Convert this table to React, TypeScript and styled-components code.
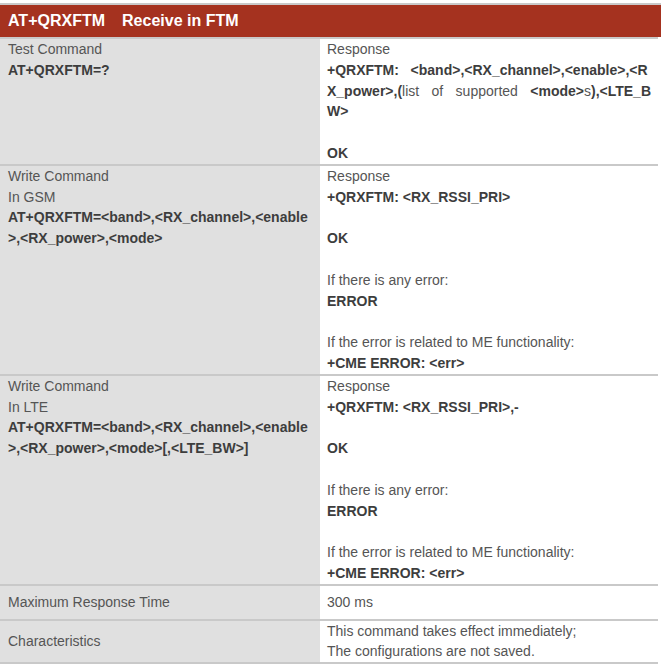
import styled, { createGlobalStyle } from "styled-components"

const GlobalStyle = createGlobalStyle`
    body {
        margin: 0;
        background: #fff;
        font-family: "Liberation Sans", Arial, sans-serif;
    }
`

const Page = styled.div`
    width: 661px;
    padding-top: 3px;
`

const Header = styled.div`
    border-top: 2px solid #c9c9c9;
    background: #a5321f;
    height: 32px;
    display: flex;
    align-items: center;
    padding: 0 8px;
    color: #fff;
    font-weight: 700;
    font-size: 16px;
    box-sizing: content-box;
`

const Title = styled.span`
    margin-left: 17px;
`

const Table = styled.div`
    width: 658px;
`

const Row = styled.div<{ $pad?: number }>`
    display: grid;
    grid-template-columns: 320px 338px;
    border-top: 2px solid #c9c9c9;
    &:last-child {
        border-bottom: 2px solid #c9c9c9;
    }
    & > div {
        padding-top: ${(p) => p.$pad ?? 0}px;
        padding-bottom: ${(p) => p.$pad ?? 0}px;
    }
`

const Cell = styled.div<{ $side: "left" | "right"; $center?: boolean }>`
    background: ${(p) => (p.$side === "left" ? "#e0e0e0" : "#fff")};
    padding-left: ${(p) => (p.$side === "left" ? 8 : 7)}px;
    padding-right: 7px;
    font-size: 14px;
    line-height: 20.8px;
    color: #555;
    display: flex;
    flex-direction: column;
    justify-content: ${(p) => (p.$center ? "center" : "flex-start")};
`

const Line = styled.div<{ $justify?: boolean }>`
    min-height: 20.8px;
    white-space: pre;
    ${(p) =>
        p.$justify &&
        `
        white-space: normal;
        text-align: justify;
        text-align-last: justify;
    `}
`

const B = styled.b`
    font-weight: 700;
    color: #3d3d3d;
`

function ErrorBlock({ first }: { first: string }) {
    return (
        <>
            <Line>Response</Line>
            <Line><B>{first}</B></Line>
            <Line />
            <Line><B>OK</B></Line>
            <Line />
            <Line>If there is any error:</Line>
            <Line><B>ERROR</B></Line>
            <Line />
            <Line>If the error is related to ME functionality:</Line>
            <Line><B>+CME ERROR: &lt;err&gt;</B></Line>
        </>
    )
}

export default function App() {
    return (
        <Page>
            <GlobalStyle />
            <Header>
                AT+QRXFTM<Title>Receive in FTM</Title>
            </Header>
            <Table>
                <Row>
                    <Cell $side="left">
                        <Line>Test Command</Line>
                        <Line><B>AT+QRXFTM=?</B></Line>
                    </Cell>
                    <Cell $side="right">
                        <Line>Response</Line>
                        <Line>
                            <B>{"+QRXFTM:   <band>,<RX_channel>,<enable>,<R"}</B>
                        </Line>
                        <Line $justify>
                            <B>X_power&gt;,(</B>list of supported <B>&lt;mode&gt;</B>s<B>),&lt;LTE_B</B>
                        </Line>
                        <Line><B>W&gt;</B></Line>
                        <Line />
                        <Line><B>OK</B></Line>
                    </Cell>
                </Row>
                <Row>
                    <Cell $side="left">
                        <Line>Write Command</Line>
                        <Line>In GSM</Line>
                        <Line><B>AT+QRXFTM=&lt;band&gt;,&lt;RX_channel&gt;,&lt;enable</B></Line>
                        <Line><B>&gt;,&lt;RX_power&gt;,&lt;mode&gt;</B></Line>
                    </Cell>
                    <Cell $side="right">
                        <ErrorBlock first="+QRXFTM: <RX_RSSI_PRI>" />
                    </Cell>
                </Row>
                <Row>
                    <Cell $side="left">
                        <Line>Write Command</Line>
                        <Line>In LTE</Line>
                        <Line><B>AT+QRXFTM=&lt;band&gt;,&lt;RX_channel&gt;,&lt;enable</B></Line>
                        <Line><B>&gt;,&lt;RX_power&gt;,&lt;mode&gt;[,&lt;LTE_BW&gt;]</B></Line>
                    </Cell>
                    <Cell $side="right">
                        <ErrorBlock first="+QRXFTM: <RX_RSSI_PRI>,-" />
                    </Cell>
                </Row>
                <Row $pad={6}>
                    <Cell $side="left" $center>
                        <Line>Maximum Response Time</Line>
                    </Cell>
                    <Cell $side="right" $center>
                        <Line>300 ms</Line>
                    </Cell>
                </Row>
                <Row>
                    <Cell $side="left" $center>
                        <Line>Characteristics</Line>
                    </Cell>
                    <Cell $side="right">
                        <Line>This command takes effect immediately;</Line>
                        <Line>The configurations are not saved.</Line>
                    </Cell>
                </Row>
            </Table>
        </Page>
    )
}
